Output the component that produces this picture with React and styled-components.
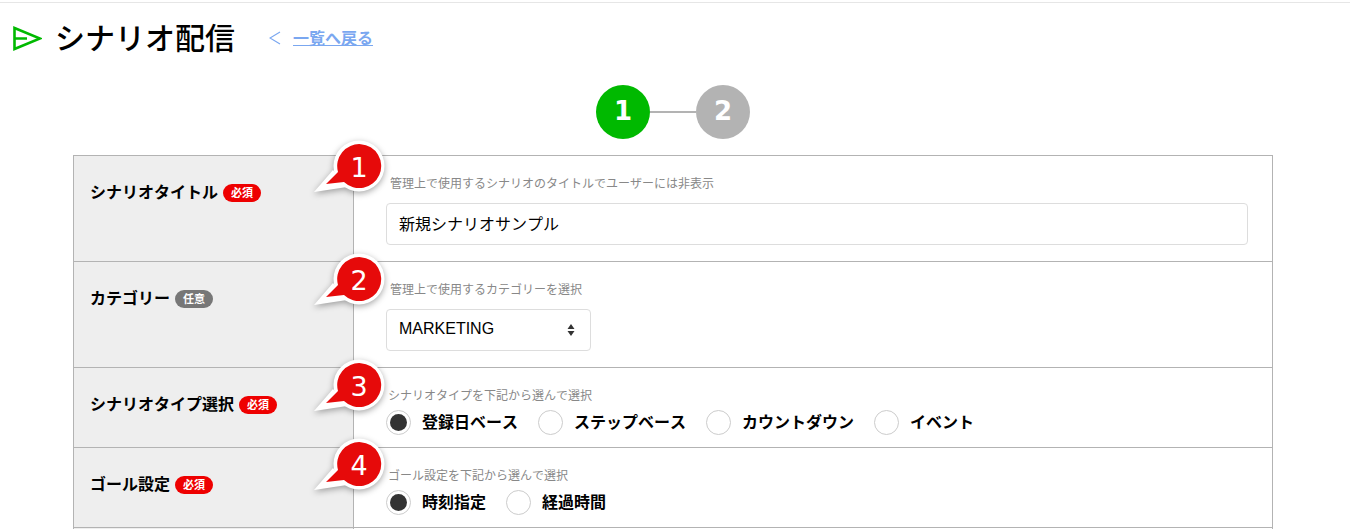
import React from "react";
import styled, { createGlobalStyle } from "styled-components";

const FONT = '"Noto Sans CJK JP", "Noto Sans", sans-serif';

const GlobalStyle = createGlobalStyle`
  html, body {
    margin: 0;
    padding: 0;
    height: 529px;
    overflow: hidden;
    background: #fff;
    font-family: ${FONT};
    font-kerning: none;
    color: #000;
  }
`;

const Page = styled.div`
  height: 529px;
  overflow: hidden;
  border-top: 2px solid transparent;
  box-sizing: border-box;
`;

const TopLine = styled.div`
  height: 1px;
  background: #e6e6e6;
`;

const Header = styled.header`
  display: flex;
  align-items: center;
  height: 70px;
  padding-left: 13px;
`;

const Title = styled.h1`
  margin: 0 0 0 13px;
  padding-bottom: 4px;
  font-size: 30px;
  line-height: 40px;
  font-weight: 500;
`;

const BackMark = styled.span`
  margin-left: 34px;
  width: 25px;
  display: flex;
  color: #7aa7f0;
`;

const BackLink = styled.a`
  margin-left: -1px;
  padding-bottom: 2px;
  font-size: 16px;
  font-weight: 700;
  color: #7aa7f0;
  text-decoration: underline;
`;

const Steps = styled.div`
  display: flex;
  align-items: center;
  justify-content: center;
  height: 54px;
  margin-top: 12px;
  padding-right: 4px;
`;

const Step = styled.div`
  width: 54px;
  height: 54px;
  box-sizing: border-box;
  padding-bottom: 3px;
  border-radius: 50%;
  background: ${(p) => (p.$active ? "#00b900" : "#b3b3b3")};
  color: #fff;
  display: flex;
  align-items: center;
  justify-content: center;
  font-family: "DejaVu Sans", sans-serif;
  font-weight: 700;
  font-size: 26px;
`;

const StepLine = styled.div`
  width: 46px;
  height: 2px;
  background: #b3b3b3;
`;

const Table = styled.div`
  margin: 16px 0 0 73px;
  width: 1200px;
  box-sizing: border-box;
  border: 1px solid #b3b3b3;
  border-bottom: 0;
`;

const Row = styled.div`
  position: relative;
  display: grid;
  grid-template-columns: 280px 1fr;
  height: ${(p) => p.$height}px;
  box-sizing: border-box;
  border-bottom: 1px solid #b3b3b3;
`;

const Head = styled.div`
  background: #eee;
  border-right: 1px solid #b3b3b3;
  padding: 23px 0 0 16px;
  display: flex;
  align-items: flex-start;
  gap: 5px;
  font-size: 16px;
  line-height: 24px;
  font-weight: 700;
`;

const Badge = styled.span`
  width: 38px;
  height: 18px;
  margin-top: 5px;
  border-radius: 9px;
  background: ${(p) => (p.$optional ? "#777" : "#e00")};
  color: #fff;
  font-size: 11px;
  line-height: 17px;
  font-weight: 700;
  text-align: center;
`;

const Cell = styled.div`
  padding: 18px 24px 0 32px;
`;

const Hint = styled.p`
  margin: 0 0 ${(p) => p.$gap}px ${(p) => p.$indent}px;
  font-size: 12px;
  line-height: 18px;
  color: #888;
`;

const Field = styled.div`
  display: flex;
  align-items: center;
  justify-content: space-between;
  box-sizing: border-box;
  width: ${(p) => p.$width}px;
  height: 42px;
  padding: 0 15px 3px 12px;
  border: 1px solid #ddd;
  border-radius: 4px;
  font-family: "Liberation Sans", ${FONT};
  font-size: 16px;
  svg {
    margin-top: 3px;
  }
`;

const RadioRow = styled.div`
  display: flex;
  align-items: center;
`;

const RadioItem = styled.label`
  display: flex;
  align-items: center;
  gap: 11px;
  margin-right: 20px;
  font-size: 16px;
  font-weight: 700;
`;

const RadioText = styled.span`
  padding-bottom: 2px;
`;

const RadioMark = styled.span`
  width: 25px;
  height: 25px;
  box-sizing: border-box;
  border: 1px solid #ccc;
  border-radius: 50%;
  display: flex;
  align-items: center;
  justify-content: center;
  &::after {
    content: "";
    width: 17px;
    height: 17px;
    border-radius: 50%;
    background: ${(p) => (p.$checked ? "#333" : "transparent")};
  }
`;

const Callout = styled.div`
  position: absolute;
  left: 231px;
  top: ${(p) => p.$top}px;
  width: 90px;
  height: 70px;
  svg {
    display: block;
    overflow: visible;
    filter: drop-shadow(0 2px 3px rgba(0, 0, 0, 0.35));
  }
`;

const CalloutNumber = styled.span`
  position: absolute;
  left: 31px;
  top: 14px;
  width: 46px;
  height: 46px;
  display: flex;
  align-items: center;
  justify-content: center;
  color: #fff;
  font-family: "DejaVu Sans", sans-serif;
  font-size: 27px;
`;

const Bubble = ({ n, top }) => (
  <Callout $top={top}>
    <svg width="90" height="70" viewBox="0 0 90 70">
      <path d="M9 62 L28 40 L42 57 Z" fill="#fff" />
      <circle cx="54" cy="36" r="25.5" fill="#fff" />
      <path d="M21 54 L33 42 A22 22 0 1 1 39 52 Z" fill="#e60a0a" />
    </svg>
    <CalloutNumber>{n}</CalloutNumber>
  </Callout>
);

const Radios = ({ items }) => (
  <RadioRow>
    {items.map((label, i) => (
      <RadioItem key={label}>
        <RadioMark $checked={i === 0} />
        <RadioText>{label}</RadioText>
      </RadioItem>
    ))}
  </RadioRow>
);

const App = () => (
  <Page>
    <GlobalStyle />
    <TopLine />
    <Header>
      <svg width="29" height="25" viewBox="0 0 29 25">
        <path d="M1.5 2 L27 12.5 L1.5 23 Z M1.5 12.5 H14" fill="none" stroke="#00b900" strokeWidth="2.6" />
      </svg>
      <Title>シナリオ配信</Title>
      <BackMark>
        <svg width="12" height="14" viewBox="0 0 12 14">
          <path d="M11 1 L1 7 L11 13" fill="none" stroke="#7aa7f0" strokeWidth="1.2" />
        </svg>
      </BackMark>
      <BackLink href="#">一覧へ戻る</BackLink>
    </Header>
    <Steps>
      <Step $active>1</Step>
      <StepLine />
      <Step>2</Step>
    </Steps>
    <Table>
      <Row $height={106}>
        <Head>シナリオタイトル<Badge>必須</Badge></Head>
        <Cell>
          <Hint $gap={11} $indent={4}>管理上で使用するシナリオのタイトルでユーザーには非表示</Hint>
          <Field $width={862}>新規シナリオサンプル</Field>
        </Cell>
        <Bubble n={1} top={-26} />
      </Row>
      <Row $height={106}>
        <Head>カテゴリー<Badge $optional>任意</Badge></Head>
        <Cell>
          <Hint $gap={11} $indent={4}>管理上で使用するカテゴリーを選択</Hint>
          <Field $width={205}>
            MARKETING
            <svg width="8" height="14" viewBox="0 0 8 14">
              <path d="M4 1 L7.5 6 H0.5 Z M4 13 L7.5 8 H0.5 Z" fill="#333" />
            </svg>
          </Field>
        </Cell>
        <Bubble n={2} top={-19} />
      </Row>
      <Row $height={80}>
        <Head>シナリオタイプ選択<Badge>必須</Badge></Head>
        <Cell>
          <Hint $gap={5} $indent={2}>シナリオタイプを下記から選んで選択</Hint>
          <Radios items={["登録日ベース", "ステップベース", "カウントダウン", "イベント"]} />
        </Cell>
        <Bubble n={3} top={-19} />
      </Row>
      <Row $height={80}>
        <Head>ゴール設定<Badge>必須</Badge></Head>
        <Cell>
          <Hint $gap={5} $indent={2}>ゴール設定を下記から選んで選択</Hint>
          <Radios items={["時刻指定", "経過時間"]} />
        </Cell>
        <Bubble n={4} top={-20} />
      </Row>
      <Row $height={80}>
        <Head />
        <Cell />
      </Row>
    </Table>
  </Page>
);

export default App;
